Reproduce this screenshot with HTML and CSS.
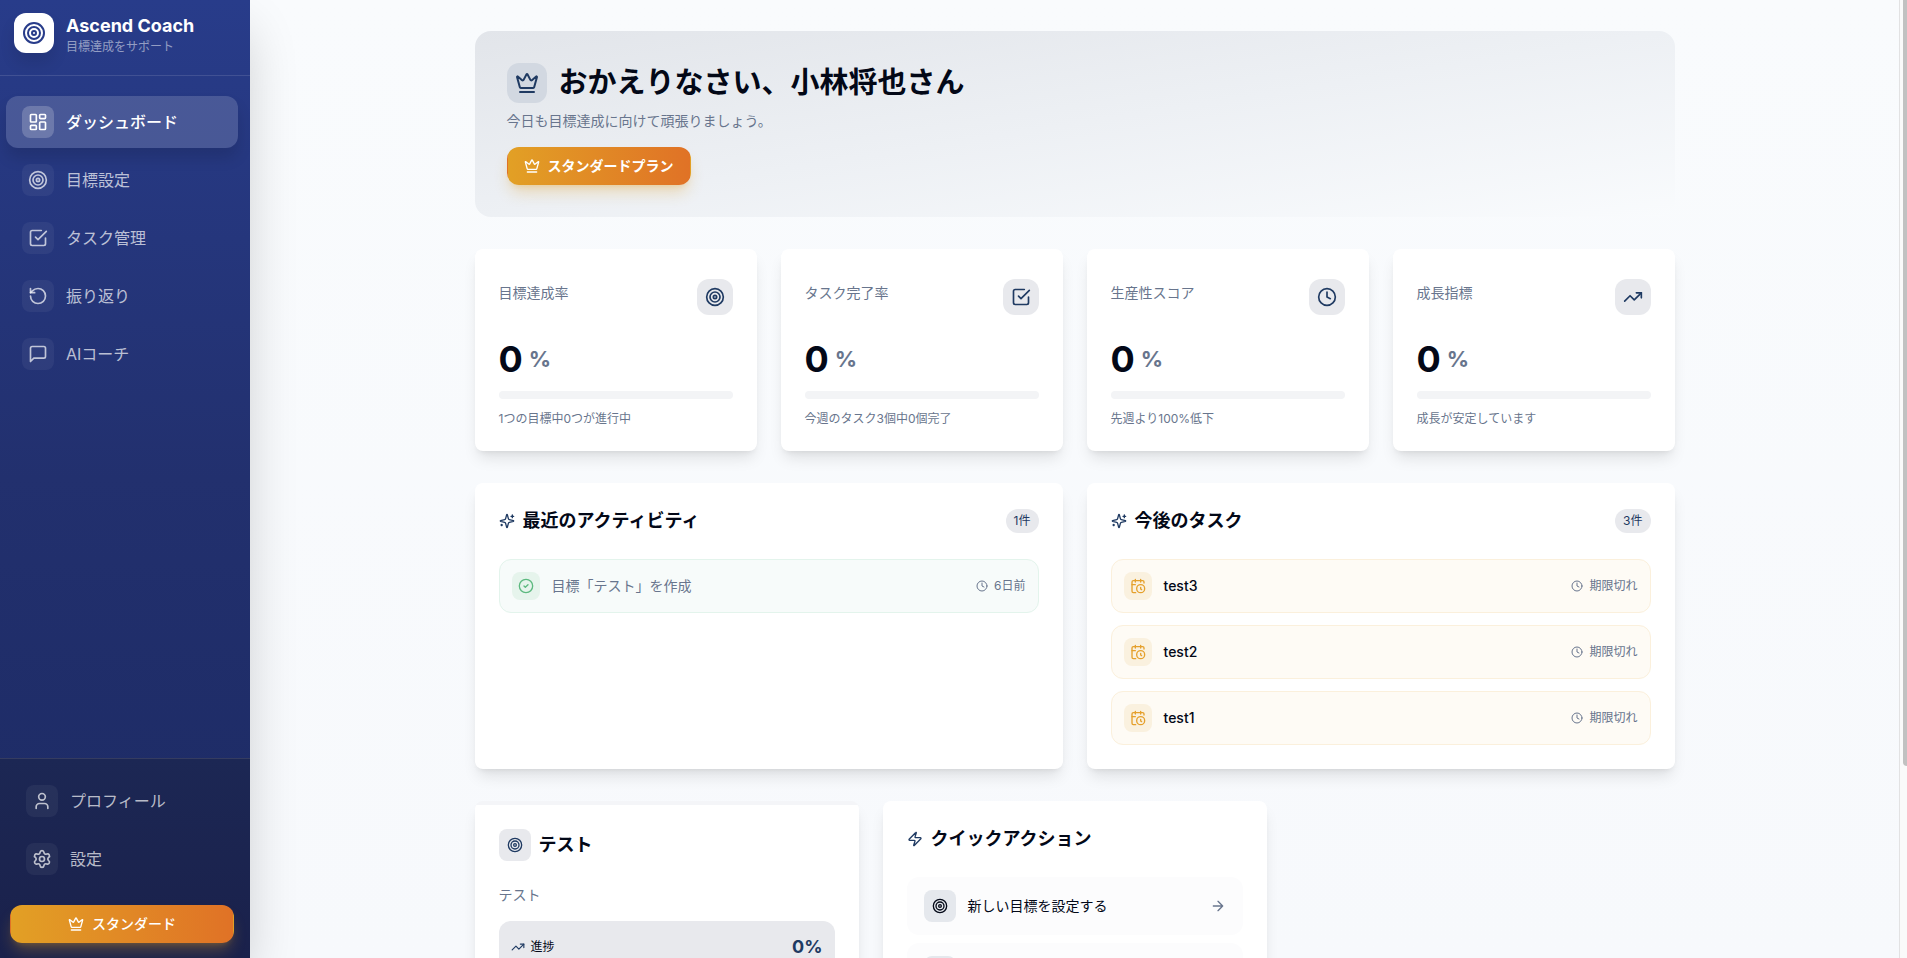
FILE: index.html
```html
<!DOCTYPE html>
<html lang="ja">
<head>
<meta charset="utf-8">
<meta name="viewport" content="width=device-width, initial-scale=1">
<title>Ascend Coach</title>
<link rel="stylesheet" href="styles.css">
</head>
<body>
<svg class="sprite" aria-hidden="true">
  <symbol id="target" viewBox="0 0 24 24"><circle cx="12" cy="12" r="10"/><circle cx="12" cy="12" r="6"/><circle cx="12" cy="12" r="2"/></symbol>
  <symbol id="dashboard" viewBox="0 0 24 24"><rect width="7" height="9" x="3" y="3" rx="1"/><rect width="7" height="5" x="14" y="3" rx="1"/><rect width="7" height="9" x="14" y="12" rx="1"/><rect width="7" height="5" x="3" y="16" rx="1"/></symbol>
  <symbol id="check-square" viewBox="0 0 24 24"><path d="m9 11 3 3L22 4"/><path d="M21 12v7a2 2 0 0 1-2 2H5a2 2 0 0 1-2-2V5a2 2 0 0 1 2-2h11"/></symbol>
  <symbol id="rotate" viewBox="0 0 24 24"><path d="M3 12a9 9 0 1 0 9-9 9.75 9.75 0 0 0-6.74 2.74L3 8"/><path d="M3 3v5h5"/></symbol>
  <symbol id="message" viewBox="0 0 24 24"><path d="M21 15a2 2 0 0 1-2 2H7l-4 4V5a2 2 0 0 1 2-2h14a2 2 0 0 1 2 2z"/></symbol>
  <symbol id="user" viewBox="0 0 24 24"><path d="M19 21v-2a4 4 0 0 0-4-4H9a4 4 0 0 0-4 4v2"/><circle cx="12" cy="7" r="4"/></symbol>
  <symbol id="settings" viewBox="0 0 24 24"><path d="M9.671 4.136a2.34 2.34 0 0 1 4.659 0 2.34 2.34 0 0 0 3.319 1.915 2.34 2.34 0 0 1 2.33 4.033 2.34 2.34 0 0 0 0 3.831 2.34 2.34 0 0 1-2.33 4.033 2.34 2.34 0 0 0-3.319 1.915 2.34 2.34 0 0 1-4.659 0 2.34 2.34 0 0 0-3.32-1.915 2.34 2.34 0 0 1-2.33-4.033 2.34 2.34 0 0 0 0-3.831A2.34 2.34 0 0 1 6.35 6.051a2.34 2.34 0 0 0 3.319-1.915"/><circle cx="12" cy="12" r="3"/></symbol>
  <symbol id="crown" viewBox="0 0 24 24"><path d="M11.562 3.266a.5.5 0 0 1 .876 0L15.39 8.87a1 1 0 0 0 1.516.294L21.183 5.5a.5.5 0 0 1 .798.519l-2.834 10.246a1 1 0 0 1-.956.734H5.81a1 1 0 0 1-.957-.734L2.02 6.02a.5.5 0 0 1 .798-.519l4.276 3.664a1 1 0 0 0 1.516-.294z"/><path d="M5 21h14"/></symbol>
  <symbol id="clock" viewBox="0 0 24 24"><circle cx="12" cy="12" r="10"/><path d="M12 6v6l4 2"/></symbol>
  <symbol id="trending" viewBox="0 0 24 24"><path d="m22 7-8.5 8.5-5-5L2 17"/><path d="M16 7h6v6"/></symbol>
  <symbol id="sparkles" viewBox="0 0 24 24"><path d="M9.937 15.5A2 2 0 0 0 8.5 14.063l-6.135-1.582a.5.5 0 0 1 0-.962L8.5 9.936A2 2 0 0 0 9.937 8.5l1.582-6.135a.5.5 0 0 1 .963 0L14.063 8.5A2 2 0 0 0 15.5 9.937l6.135 1.581a.5.5 0 0 1 0 .964L15.5 14.063a2 2 0 0 0-1.437 1.437l-1.582 6.135a.5.5 0 0 1-.963 0z"/><path d="M20 3v4M22 5h-4M4 17v2M5 18H3"/></symbol>
  <symbol id="check-circle" viewBox="0 0 24 24"><circle cx="12" cy="12" r="10"/><path d="m9 12 2 2 4-4"/></symbol>
  <symbol id="calendar-clock" viewBox="0 0 24 24"><path d="M21 7.5V6a2 2 0 0 0-2-2H5a2 2 0 0 0-2 2v14a2 2 0 0 0 2 2h3.5"/><path d="M16 2v4M8 2v4M3 10h5M17.5 17.5 16 16.3V14"/><circle cx="16" cy="16" r="6"/></symbol>
  <symbol id="zap" viewBox="0 0 24 24"><path d="M4 14a1 1 0 0 1-.78-1.63l9.9-10.2a.5.5 0 0 1 .86.46l-1.92 6.02A1 1 0 0 0 13 10h7a1 1 0 0 1 .78 1.63l-9.9 10.2a.5.5 0 0 1-.86-.46l1.92-6.02A1 1 0 0 0 11 14z"/></symbol>
  <symbol id="arrow" viewBox="0 0 24 24"><path d="M5 12h14M12 5l7 7-7 7"/></symbol>
</svg>

<div class="app">
  <aside class="sidebar">
    <div class="brand">
      <span class="brand-logo"><svg class="icon icon-lg"><use href="#target"/></svg></span>
      <div>
        <div class="brand-name">Ascend Coach</div>
        <div class="brand-tag">目標達成をサポート</div>
      </div>
    </div>
    <nav class="nav">
      <a class="nav-link active" href="#" aria-current="page"><span class="nav-icon"><svg class="icon icon-md"><use href="#dashboard"/></svg></span>ダッシュボード</a>
      <a class="nav-link" href="#"><span class="nav-icon"><svg class="icon icon-md"><use href="#target"/></svg></span>目標設定</a>
      <a class="nav-link" href="#"><span class="nav-icon"><svg class="icon icon-md"><use href="#check-square"/></svg></span>タスク管理</a>
      <a class="nav-link" href="#"><span class="nav-icon"><svg class="icon icon-md"><use href="#rotate"/></svg></span>振り返り</a>
      <a class="nav-link" href="#"><span class="nav-icon"><svg class="icon icon-md"><use href="#message"/></svg></span>AIコーチ</a>
    </nav>
    <div class="sidebar-footer">
      <a class="nav-link" href="#"><span class="nav-icon"><svg class="icon icon-md"><use href="#user"/></svg></span>プロフィール</a>
      <a class="nav-link" href="#"><span class="nav-icon"><svg class="icon icon-md"><use href="#settings"/></svg></span>設定</a>
      <button class="plan plan-wide" type="button"><svg class="icon icon-sm"><use href="#crown"/></svg>スタンダード</button>
    </div>
  </aside>

  <main class="main">
    <div class="container">
      <header class="hero">
        <div class="hero-title">
          <span class="hero-icon"><svg class="icon icon-lg"><use href="#crown"/></svg></span>
          <h1>おかえりなさい、小林将也さん</h1>
        </div>
        <p class="hero-text">今日も目標達成に向けて頑張りましょう。</p>
        <button class="plan" type="button"><svg class="icon icon-sm"><use href="#crown"/></svg>スタンダードプラン</button>
      </header>

      <section class="stats">
        <article class="card stat">
          <div class="stat-head"><h2>目標達成率</h2><span class="stat-icon"><svg class="icon icon-md"><use href="#target"/></svg></span></div>
          <div class="stat-value">0<span>%</span></div>
          <div class="bar" role="progressbar" aria-label="目標達成率" aria-valuenow="0"></div>
          <p class="stat-note">1つの目標中0つが進行中</p>
        </article>
        <article class="card stat">
          <div class="stat-head"><h2>タスク完了率</h2><span class="stat-icon"><svg class="icon icon-md"><use href="#check-square"/></svg></span></div>
          <div class="stat-value">0<span>%</span></div>
          <div class="bar" role="progressbar" aria-label="タスク完了率" aria-valuenow="0"></div>
          <p class="stat-note">今週のタスク3個中0個完了</p>
        </article>
        <article class="card stat">
          <div class="stat-head"><h2>生産性スコア</h2><span class="stat-icon"><svg class="icon icon-md"><use href="#clock"/></svg></span></div>
          <div class="stat-value">0<span>%</span></div>
          <div class="bar" role="progressbar" aria-label="生産性スコア" aria-valuenow="0"></div>
          <p class="stat-note">先週より100%低下</p>
        </article>
        <article class="card stat">
          <div class="stat-head"><h2>成長指標</h2><span class="stat-icon"><svg class="icon icon-md"><use href="#trending"/></svg></span></div>
          <div class="stat-value">0<span>%</span></div>
          <div class="bar" role="progressbar" aria-label="成長指標" aria-valuenow="0"></div>
          <p class="stat-note">成長が安定しています</p>
        </article>
      </section>

      <section class="lists">
        <article class="card panel">
          <div class="panel-head"><svg class="icon icon-sm"><use href="#sparkles"/></svg><h2>最近のアクティビティ</h2><span class="count">1件</span></div>
          <ul class="items">
            <li class="item done"><span class="item-icon"><svg class="icon icon-sm"><use href="#check-circle"/></svg></span><span class="item-name">目標「テスト」を作成</span><span class="item-time"><svg class="icon icon-xs"><use href="#clock"/></svg>6日前</span></li>
          </ul>
        </article>
        <article class="card panel">
          <div class="panel-head"><svg class="icon icon-sm"><use href="#sparkles"/></svg><h2>今後のタスク</h2><span class="count">3件</span></div>
          <ul class="items">
            <li class="item due"><span class="item-icon"><svg class="icon icon-sm"><use href="#calendar-clock"/></svg></span><span class="item-name">test3</span><span class="item-time"><svg class="icon icon-xs"><use href="#clock"/></svg>期限切れ</span></li>
            <li class="item due"><span class="item-icon"><svg class="icon icon-sm"><use href="#calendar-clock"/></svg></span><span class="item-name">test2</span><span class="item-time"><svg class="icon icon-xs"><use href="#clock"/></svg>期限切れ</span></li>
            <li class="item due"><span class="item-icon"><svg class="icon icon-sm"><use href="#calendar-clock"/></svg></span><span class="item-name">test1</span><span class="item-time"><svg class="icon icon-xs"><use href="#clock"/></svg>期限切れ</span></li>
          </ul>
        </article>
      </section>

      <section class="bottom">
        <article class="card goal">
          <div class="goal-body">
            <div class="goal-head"><span class="goal-icon"><svg class="icon icon-sm"><use href="#target"/></svg></span><h2>テスト</h2></div>
            <p class="goal-text">テスト</p>
            <div class="goal-progress"><svg class="icon icon-14"><use href="#trending"/></svg><span>進捗</span><strong>0%</strong></div>
          </div>
        </article>
        <article class="card panel">
          <div class="panel-head"><svg class="icon icon-sm"><use href="#zap"/></svg><h2>クイックアクション</h2></div>
          <div class="actions">
            <button class="action" type="button"><span class="action-icon"><svg class="icon icon-sm"><use href="#target"/></svg></span><span class="action-name">新しい目標を設定する</span><svg class="icon icon-sm action-arrow"><use href="#arrow"/></svg></button>
            <button class="action" type="button" aria-label="タスク"><span class="action-icon"><svg class="icon icon-sm"><use href="#check-square"/></svg></span></button>
          </div>
        </article>
      </section>
    </div>
  </main>

  <div class="scroll-track" aria-hidden="true"><div class="scroll-thumb"></div></div>
</div>
</body>
</html>
```
FILE: styles.css
```css
* {
  box-sizing: border-box;
}

:root {
  --ink: #030817;
  --muted: #68758d;
  --navy: #1f3a62;
  --tint: #e8e9ed;
}

body {
  margin: 0;
  color: var(--ink);
  font-family: Inter, "Noto Sans CJK JP", sans-serif;
  font-size: 14px;
  line-height: 20px;
}

h1, h2, p, ul {
  margin: 0;
  padding: 0;
}

button {
  font: inherit;
  color: inherit;
  cursor: pointer;
}

.sprite {
  display: none;
}

.icon {
  flex: none;
  fill: none;
  stroke: currentColor;
  stroke-width: 2;
  stroke-linecap: round;
  stroke-linejoin: round;
}

.icon-xs { width: 12px; height: 12px; }
.icon-14 { width: 14px; height: 14px; }
.icon-sm { width: 16px; height: 16px; }
.icon-md { width: 20px; height: 20px; }
.icon-lg { width: 24px; height: 24px; }

.app {
  display: flex;
  height: 100vh;
  overflow: hidden;
}

/* Sidebar */
.sidebar {
  position: relative;
  z-index: 1;
  display: flex;
  flex: none;
  flex-direction: column;
  width: 250px;
  color: #fff;
  background: linear-gradient(180deg, #283c8a 0%, #22306e 50%, #1c2a63 100%);
  box-shadow: 0 25px 50px -6px rgba(0, 0, 0, 0.2);
}

.brand {
  display: flex;
  gap: 12px;
  padding: 13px 14px 20px;
  border-bottom: 1px solid rgba(255, 255, 255, 0.12);
}

.brand-logo {
  display: grid;
  place-items: center;
  width: 40px;
  height: 40px;
  border-radius: 12px;
  color: #283c8a;
  background: #fff;
  box-shadow: 0 10px 15px rgba(0, 0, 0, 0.1);
}

.brand-name {
  font-size: 18px;
  font-weight: 700;
  line-height: 26px;
}

.brand-tag {
  color: rgba(255, 255, 255, 0.5);
  font-size: 12px;
  line-height: 16px;
}

.nav {
  display: flex;
  flex: 1;
  flex-direction: column;
  gap: 6px;
  padding: 20px 12px 0 6px;
}

.nav-link {
  display: flex;
  align-items: center;
  gap: 12px;
  padding: 10px 16px;
  border-radius: 12px;
  color: rgba(255, 255, 255, 0.7);
  font-size: 16px;
  font-weight: 400;
  line-height: 24px;
  text-decoration: none;
}

.nav-icon {
  display: grid;
  place-items: center;
  width: 32px;
  height: 32px;
  border-radius: 8px;
  background: rgba(255, 255, 255, 0.05);
}

.nav-link.active {
  color: #fff;
  font-weight: 500;
  background: rgba(255, 255, 255, 0.16);
  box-shadow: 0 10px 15px rgba(0, 0, 0, 0.12);
}

.active .nav-icon {
  background: rgba(255, 255, 255, 0.2);
}

.sidebar-footer {
  display: flex;
  flex-direction: column;
  gap: 6px;
  padding: 16px 16px 15px 10px;
  border-top: 1px solid rgba(255, 255, 255, 0.12);
  background: linear-gradient(180deg, #1c2754, #1a214b);
}

/* Plan button */
.plan {
  display: inline-flex;
  align-items: center;
  justify-content: center;
  gap: 8px;
  padding: 8px 16px;
  border: 1px solid transparent;
  border-radius: 12px;
  color: #fff;
  font-weight: 700;
  background: linear-gradient(90deg, #e2a025, #e07226);
  box-shadow: 0 10px 15px -3px rgba(226, 160, 37, 0.3), 0 4px 6px -4px rgba(226, 160, 37, 0.3);
}

.plan-wide {
  margin-top: 14px;
  font-weight: 500;
}

/* Main area */
.main {
  flex: 1;
  min-width: 0;
  padding: 31px 24px;
  overflow: hidden;
  background: linear-gradient(180deg, #f9fbfd, #f7f9fc);
}

.container {
  display: flex;
  flex-direction: column;
  gap: 32px;
  max-width: 1200px;
  margin: 0 auto;
}

.hero {
  padding: 32px;
  border-radius: 16px;
  background: linear-gradient(to bottom right, #e2e5ea, #edf0f4 50%, #f9fbfd);
}

.hero-title {
  display: flex;
  align-items: center;
  gap: 12px;
}

.hero-icon {
  display: grid;
  place-items: center;
  width: 40px;
  height: 40px;
  border-radius: 12px;
  color: var(--navy);
  background: #d2d8e1;
}

.hero h1 {
  font-size: 29px;
  font-weight: 700;
  line-height: 40px;
}

.hero-text {
  margin: 8px 0 16px;
  color: var(--muted);
}

.card {
  border-radius: 8px;
  background: #fff;
  box-shadow: 0 10px 15px -3px rgba(0, 0, 0, 0.1), 0 4px 6px -4px rgba(0, 0, 0, 0.1);
}

/* Stat cards */
.stats {
  display: grid;
  grid-template-columns: repeat(4, 1fr);
  gap: 24px;
}

.stat {
  padding: 30px 24px 24px;
}

.stat-head {
  display: flex;
  justify-content: space-between;
}

.stat-head h2 {
  padding-top: 4px;
  color: var(--muted);
  font-size: 14px;
  font-weight: 400;
}

.stat-icon {
  display: grid;
  place-items: center;
  width: 36px;
  height: 36px;
  border-radius: 12px;
  color: var(--navy);
  background: var(--tint);
}

.stat-value {
  display: flex;
  align-items: center;
  gap: 6px;
  margin-top: 24px;
  font-size: 36px;
  font-weight: 700;
  line-height: 40px;
}

.stat-value span {
  color: var(--muted);
  font-size: 22px;
  font-weight: 700;
}

.bar {
  height: 8px;
  margin: 12px 0;
  border-radius: 4px;
  background: #f3f4f6;
}

.stat-note {
  color: var(--muted);
  font-size: 12px;
  line-height: 16px;
}

/* Lists */
.lists {
  display: grid;
  grid-template-columns: repeat(2, 1fr);
  gap: 24px;
}

.panel {
  padding: 24px;
}

.panel-head {
  display: flex;
  align-items: center;
  gap: 8px;
  margin-bottom: 24px;
  color: var(--navy);
}

.panel-head h2,
.goal h2 {
  color: var(--ink);
  font-size: 18px;
  font-weight: 700;
  line-height: 28px;
}

.count {
  margin-left: auto;
  padding: 4px 8px;
  border-radius: 12px;
  font-size: 12px;
  line-height: 16px;
  background: var(--tint);
}

.items {
  display: flex;
  flex-direction: column;
  gap: 12px;
  list-style: none;
}

.item {
  display: flex;
  align-items: center;
  gap: 12px;
  padding: 12px;
  border: 1px solid;
  border-radius: 12px;
}

.item-icon {
  display: grid;
  place-items: center;
  width: 28px;
  height: 28px;
  border-radius: 8px;
}

.item-name {
  flex: 1;
  font-weight: 500;
}

.item-time {
  display: flex;
  align-items: center;
  gap: 6px;
  color: var(--muted);
  font-size: 12px;
  line-height: 16px;
}

.done {
  border-color: #e3f4ec;
  background: #f7fbfa;
}

.done .item-icon {
  color: #5cb97f;
  background: #e6f4ec;
}

.done .item-name {
  color: var(--muted);
  font-weight: 400;
}

.due {
  border-color: #fbf0dc;
  background: #fefbf5;
}

.due .item-icon {
  color: #e5a02c;
  background: #faf1df;
}

/* Goal and quick actions */
.bottom {
  display: grid;
  grid-template-columns: repeat(3, 1fr);
  gap: 24px;
}

.goal {
  padding-top: 4px;
  overflow: hidden;
  background: #f4f5f8;
}

.goal-body {
  height: 100%;
  padding: 24px;
  border-radius: 2px 2px 0 0;
  background: #fff;
}

.goal-head {
  display: flex;
  align-items: center;
  gap: 8px;
}

.goal-icon {
  display: grid;
  place-items: center;
  width: 32px;
  height: 32px;
  border-radius: 8px;
  color: var(--navy);
  background: var(--tint);
}

.goal-text {
  margin: 24px 0 16px;
  color: var(--muted);
}

.goal-progress {
  display: flex;
  align-items: center;
  gap: 6px;
  padding: 12px;
  border-radius: 12px;
  color: var(--navy);
  background: var(--tint);
}

.goal-progress span {
  color: var(--ink);
  font-size: 12px;
}

.goal-progress strong {
  margin-left: auto;
  font-size: 18px;
  font-weight: 700;
  line-height: 28px;
}

.actions {
  display: flex;
  flex-direction: column;
  gap: 8px;
}

.action {
  display: flex;
  align-items: center;
  gap: 12px;
  padding: 12px 16px;
  border: 1px solid transparent;
  border-radius: 12px;
  text-align: left;
  background: #fcfcfd;
}

.action-icon {
  display: grid;
  place-items: center;
  width: 32px;
  height: 32px;
  border-radius: 8px;
  background: #e5e8ed;
}

.action-name {
  flex: 1;
}

.action-arrow {
  color: var(--muted);
}

/* Scroll indicator */
.scroll-track {
  flex: none;
  width: 8px;
  padding-left: 3px;
  overflow: hidden;
  border-left: 1px solid #e2e2e3;
  background: #fafafa;
}

.scroll-thumb {
  width: 8px;
  height: 80%;
  border-radius: 0 0 4px 4px;
  background: #c1c1c1;
}
```
